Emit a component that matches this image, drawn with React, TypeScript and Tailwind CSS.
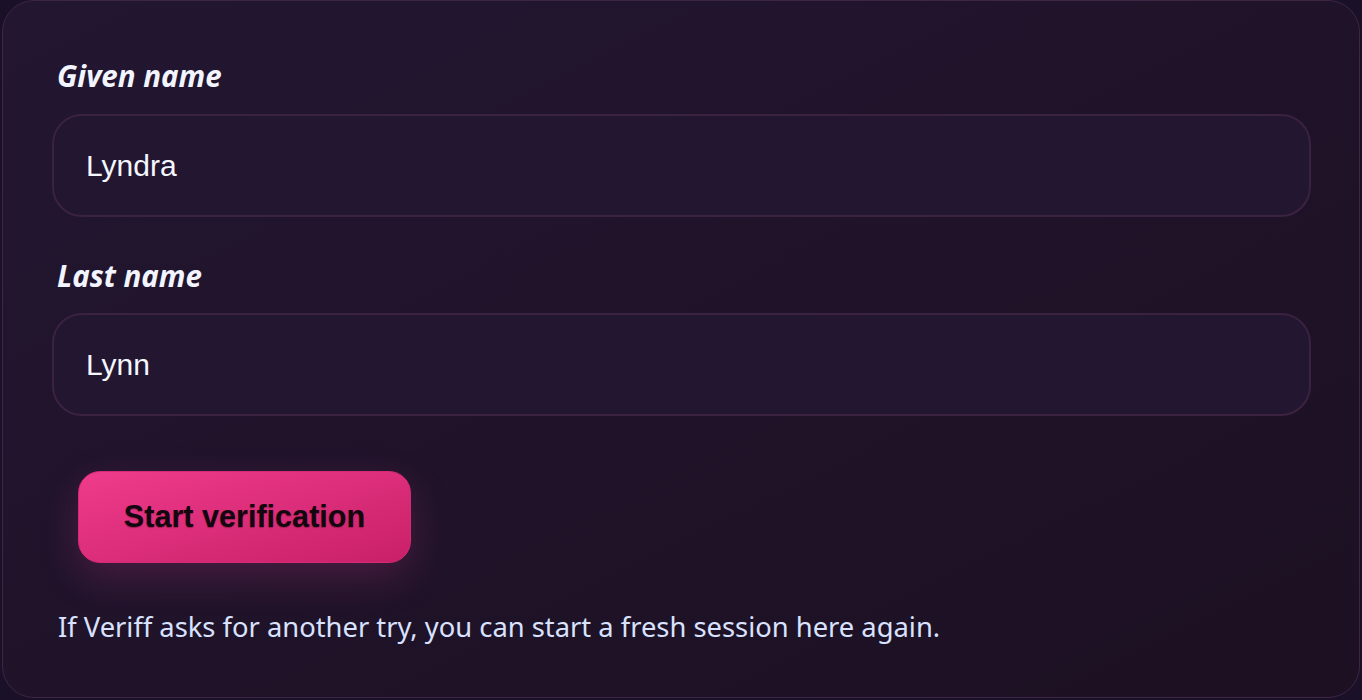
export default function App() {
  return (
    <div className="w-[1362px] h-[700px] bg-[#1a1027] overflow-hidden">
      <div className="ml-[2px] w-[1358px] h-[698px] rounded-[32px] border border-[#3d2544] bg-gradient-to-br from-[#231631] to-[#1c1022] pl-[49px] pr-[48px] pt-[59px]">
        <div className="ml-[5px] h-[32px] leading-[32px] text-[29.5px] font-bold italic text-[#f2f5ff] [font-family:'Noto_Sans',sans-serif]">
          Given name
        </div>
        <div className="mt-[22px] h-[103px] rounded-[30px] border-2 border-[#3a2240] bg-[#231631] flex items-center pl-[32px] text-[30px] text-[#f5f7ff] [font-family:'Liberation_Sans',Arial,sans-serif]">
          Lyndra
        </div>
        <div className="mt-[43px] ml-[5px] h-[32px] leading-[32px] text-[29.5px] font-bold italic text-[#f2f5ff] [font-family:'Noto_Sans',sans-serif]">
          Last name
        </div>
        <div className="mt-[21px] h-[103px] rounded-[30px] border-2 border-[#3a2240] bg-[#231631] flex items-center pl-[32px] text-[30px] text-[#f5f7ff] [font-family:'Liberation_Sans',Arial,sans-serif]">
          Lynn
        </div>
        <div className="mt-[55px] ml-[26px]">
          <button className="h-[92px] w-[333px] rounded-[22px] border border-[#d62a77] bg-gradient-to-br from-[#ef3b8b] to-[#c91f69] text-[30.6px] font-bold text-[#14060e] [font-family:'Liberation_Sans',Arial,sans-serif] shadow-[0_14px_40px_rgba(236,72,153,0.2)] [text-shadow:0_1px_1px_rgba(120,20,60,0.6)]">
            Start verification
          </button>
        </div>
        <p className="mt-[46px] ml-[6px] h-[36px] leading-[36px] text-[27.35px] text-[#d9e2ff] [font-family:'Noto_Sans',sans-serif]">
          If Veriff asks for another try, you can start a fresh session here again.
        </p>
      </div>
    </div>
  );
}
